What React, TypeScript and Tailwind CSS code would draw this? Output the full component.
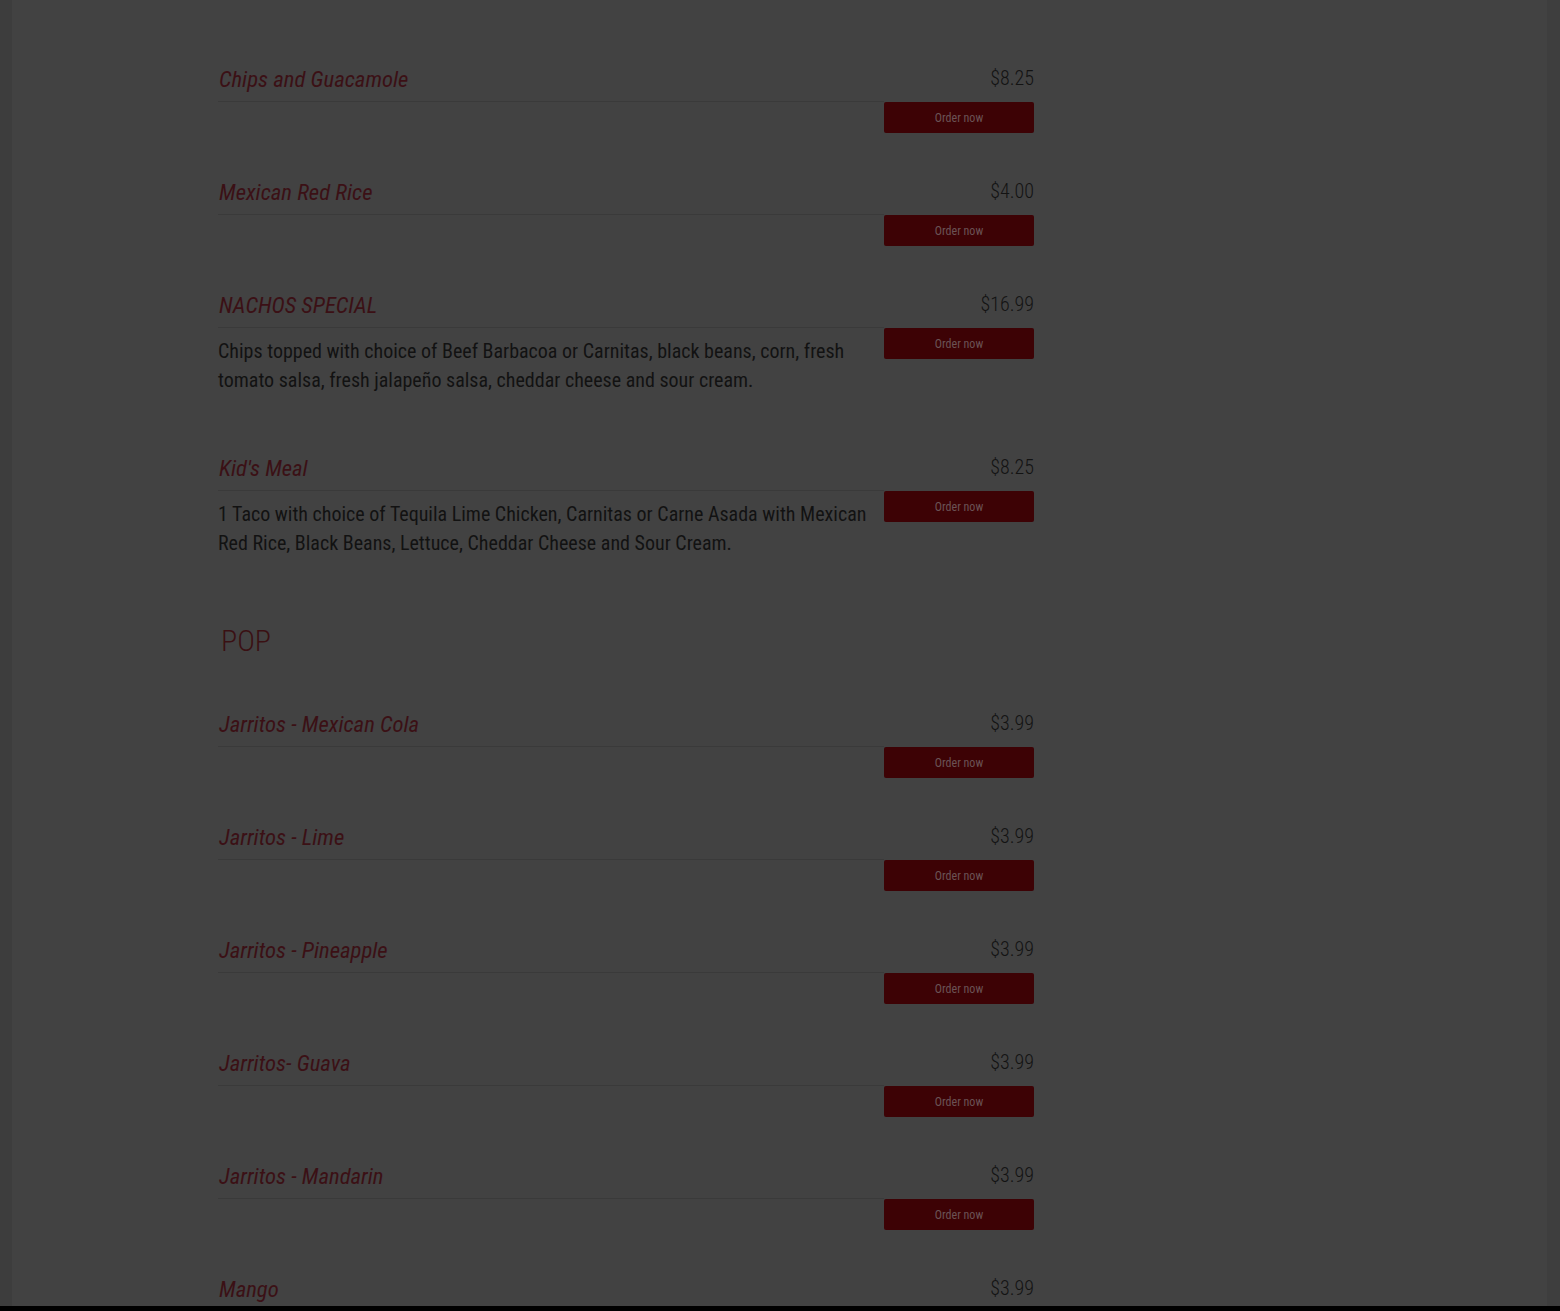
import React from "react";

type Item = { name: string; price: string; desc?: string };

const sides: Item[] = [
  { name: "Chips and Guacamole", price: "$8.25" },
  { name: "Mexican Red Rice", price: "$4.00" },
  {
    name: "NACHOS SPECIAL",
    price: "$16.99",
    desc: "Chips topped with choice of Beef Barbacoa or Carnitas, black beans, corn, fresh tomato salsa, fresh jalapeño salsa, cheddar cheese and sour cream.",
  },
  {
    name: "Kid's Meal",
    price: "$8.25",
    desc: "1 Taco with choice of Tequila Lime Chicken, Carnitas or Carne Asada with Mexican Red Rice, Black Beans, Lettuce, Cheddar Cheese and Sour Cream.",
  },
];

const pop: Item[] = [
  { name: "Jarritos - Mexican Cola", price: "$3.99" },
  { name: "Jarritos - Lime", price: "$3.99" },
  { name: "Jarritos - Pineapple", price: "$3.99" },
  { name: "Jarritos- Guava", price: "$3.99" },
  { name: "Jarritos - Mandarin", price: "$3.99" },
  { name: "Mango", price: "$3.99" },
];

const font = { fontFamily: '"Roboto Condensed", "Liberation Sans Narrow", Roboto, sans-serif' };

function MenuItem({ item }: { item: Item }) {
  return (
    <div className="flex pt-[45px]">
      <div className="flex-1 min-w-0">
        <div className="border-b border-[#3a3a3a] pb-[6px] pl-[1px]">
          <span className="text-[22.7px] leading-[30px] italic text-[#3b1015]">{item.name}</span>
        </div>
        {item.desc && (
          <p className="mt-[9px] mb-[14px] pr-[15px] text-[20px] leading-[29px] text-[#121212]">{item.desc}</p>
        )}
      </div>
      <div className="w-[150px] flex flex-col items-end">
        <div className="h-[37px] text-[20px] leading-[26px] font-light text-[#131313]">{item.price}</div>
        <button className="w-[150px] h-[31px] rounded-[2px] bg-[#3d0205] text-[12px] text-[#6b5355]">
          Order now
        </button>
      </div>
    </div>
  );
}

export default function App() {
  return (
    <div className="w-[1560px] h-[1311px] flex flex-col bg-black" style={font}>
      <div className="h-[1306px] overflow-hidden flex bg-[#424242]">
        <div className="w-[12px] bg-[#3d3d3d]" />
        <div className="flex-1 pl-[206px]">
          <div className="w-[816px]">
            <h2 className="-mt-[28px] mb-[12px] pl-[2px] h-[36px] text-[30px] leading-[36px] font-light text-[#3a1013]">
              APPETIZERS &amp; SIDES
            </h2>
            {sides.map((it) => (
              <MenuItem key={it.name} item={it} />
            ))}
            <h2 className="mt-[51px] mb-[6px] pl-[3px] h-[36px] text-[30px] leading-[36px] font-light text-[#3a1013]">
              POP
            </h2>
            {pop.map((it) => (
              <MenuItem key={it.name} item={it} />
            ))}
          </div>
        </div>
        <div className="w-[13px] bg-[#3e3e3e]" />
      </div>
      <div className="h-[5px] bg-black" />
    </div>
  );
}
